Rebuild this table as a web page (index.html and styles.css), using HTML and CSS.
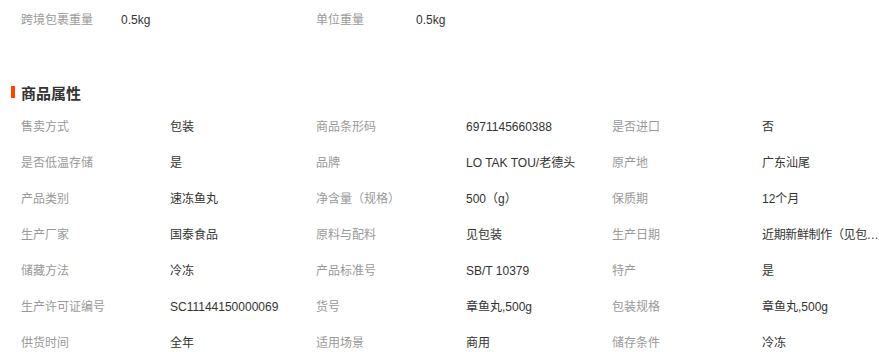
FILE: index.html
```html
<!DOCTYPE html>
<html lang="zh-CN">
<head>
<meta charset="utf-8">
<link rel="stylesheet" href="styles.css">
</head>
<body>
<div class="page">
  <div class="top-row">
    <div class="pair"><span class="k">跨境包裹重量</span><span class="v">0.5kg</span></div>
    <div class="pair"><span class="k">单位重量</span><span class="v">0.5kg</span></div>
  </div>
  <h2 class="title"><span class="bar"></span>商品属性</h2>
  <div class="attrs">
    <div class="k">售卖方式</div><div class="v">包装</div>
    <div class="k">商品条形码</div><div class="v">6971145660388</div>
    <div class="k">是否进口</div><div class="v">否</div>

    <div class="k">是否低温存储</div><div class="v">是</div>
    <div class="k">品牌</div><div class="v">LO TAK TOU/老德头</div>
    <div class="k">原产地</div><div class="v">广东汕尾</div>

    <div class="k">产品类别</div><div class="v">速冻鱼丸</div>
    <div class="k">净含量（规格）</div><div class="v">500（g）</div>
    <div class="k">保质期</div><div class="v">12个月</div>

    <div class="k">生产厂家</div><div class="v">国泰食品</div>
    <div class="k">原料与配料</div><div class="v">见包装</div>
    <div class="k">生产日期</div><div class="v tight">近期新鲜制作（见包装）</div>

    <div class="k">储藏方法</div><div class="v">冷冻</div>
    <div class="k">产品标准号</div><div class="v">SB/T 10379</div>
    <div class="k">特产</div><div class="v">是</div>

    <div class="k">生产许可证编号</div><div class="v">SC11144150000069</div>
    <div class="k">货号</div><div class="v">章鱼丸,500g</div>
    <div class="k">包装规格</div><div class="v">章鱼丸,500g</div>

    <div class="k">供货时间</div><div class="v">全年</div>
    <div class="k">适用场景</div><div class="v">商用</div>
    <div class="k">储存条件</div><div class="v">冷冻</div>
  </div>
</div>
</body>
</html>
```
FILE: styles.css
```css
* { box-sizing: border-box; }
html, body { margin: 0; padding: 0; background: #fff; }
body {
  font-family: "Liberation Sans", "Noto Sans CJK SC", Arial, sans-serif;
  font-size: 12px;
  color: #333;
}
.page { width: 879px; overflow: hidden; }
.top-row {
  display: flex;
  padding: 2px 0 0 21px;
  height: 38px;
}
.pair {
  display: flex;
  width: 295px;
  line-height: 36px;
}
.pair .k { width: 100px; color: #999; }
.pair .v { color: #333; }
.title {
  display: flex;
  align-items: center;
  margin: 42px 0 0 0;
  height: 24px;
  font-size: 15px;
  font-weight: bold;
  color: #333;
  padding-left: 11px;
}
.bar {
  display: inline-block;
  width: 4px;
  height: 12px;
  background: #ff4400;
  margin-right: 6px;
}
.attrs {
  margin-top: 5px;
  padding-left: 21px;
  display: grid;
  grid-template-columns: 149px 146px 150px 146px 150px 117px;
  grid-auto-rows: 36px;
  line-height: 36px;
}
.attrs .k { color: #999; white-space: nowrap; }
.attrs .v {
  color: #333;
  white-space: nowrap;
  overflow: hidden;
  text-overflow: ellipsis;
}
.attrs .v.tight { letter-spacing: -0.35px; }
```
